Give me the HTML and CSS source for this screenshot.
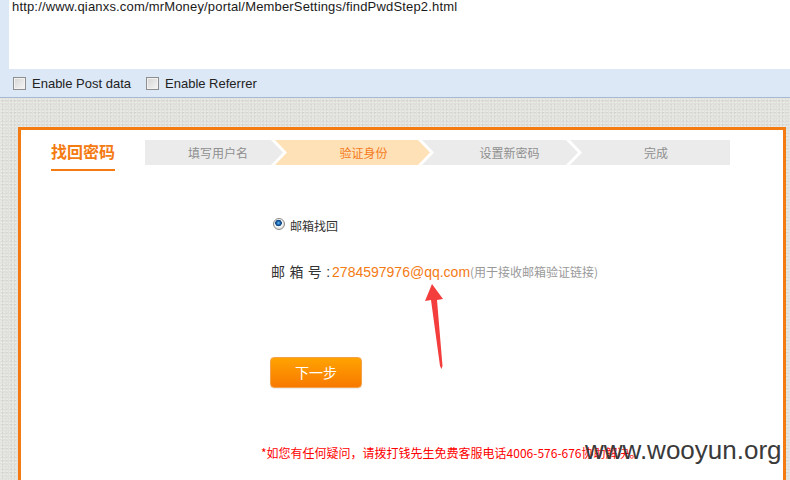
FILE: index.html
```html
<!DOCTYPE html>
<html lang="zh-CN">
<head>
<meta charset="utf-8">
<title>找回密码</title>
<link rel="stylesheet" href="styles.css">
</head>
<body>
<div class="toolbar">
  <div class="urlbox">http://www.qianxs.com/mrMoney/portal/MemberSettings/findPwdStep2.html</div>
  <div class="options">
    <label class="opt"><span class="cb"></span>Enable Post data</label>
    <label class="opt"><span class="cb"></span>Enable Referrer</label>
  </div>
</div>
<div class="page">
  <div class="box">
    <div class="head">
      <h1 class="title">找回密码</h1>
      <div class="steps">
        <div class="step s1">填写用户名</div>
        <div class="step s2 active">验证身份</div>
        <div class="step s3">设置新密码</div>
        <div class="step s4">完成</div>
      </div>
    </div>
    <div class="content">
      <div class="radio-row"><span class="radio"></span>邮箱找回</div>
      <div class="email-row"><span class="lbl">邮 箱 号 :</span><span class="email">2784597976@qq.com</span><span class="hint">(用于接收邮箱验证链接)</span></div>
      <button class="next" type="button">下一步</button>
      <p class="notice">*如您有任何疑问，请拨打钱先生免费客服电话4006-576-676协助解决。</p>
    </div>
  </div>
</div>
<svg class="arrow" width="30" height="92" viewBox="0 0 30 92">
  <polygon points="12,4 23,19 17,20 22.5,86 21.5,89 20,86 11,20 5,21" fill="#f43d3d"/>
</svg>
<div class="watermark">www.wooyun.org</div>
</body>
</html>
```

FILE: styles.css
```css
html, body {
  margin: 0;
  padding: 0;
}
body {
  width: 790px;
  height: 480px;
  overflow: hidden;
  position: relative;
  font-family: "Liberation Sans", "Noto Sans CJK SC", sans-serif;
  background: #dededa;
}
.toolbar {
  background: #dce8f6;
  height: 97px;
  border-bottom: 1px solid #a7b9d0;
  display: flex;
  flex-direction: column;
}
.urlbox {
  margin-left: 9px;
  height: 69px;
  background: #fff;
  padding-left: 3px;
  font-family: "Liberation Sans", sans-serif;
  font-size: 13px;
  letter-spacing: 0.17px;
  line-height: 14px;
  color: #1a1a1a;
  white-space: nowrap;
}
.options {
  height: 28px;
  display: flex;
  align-items: center;
  padding-left: 13px;
  font-size: 13px;
  color: #222;
}
.opt {
  display: flex;
  align-items: center;
  margin-right: 15px;
}
.cb {
  width: 11px;
  height: 11px;
  border: 1px solid #8e8e8e;
  background: linear-gradient(135deg, #d4d4d4, #f6f6f6);
  box-shadow: inset 0 0 0 1px #f2f2f2;
  margin-right: 6px;
}
.page {
  height: 382px;
  box-sizing: border-box;
  padding: 29px 4px 0 18px;
  background-color: #dfdfdb;
  background-image:
    radial-gradient(circle at 30% 40%, rgba(255,255,255,0.35) 0.6px, transparent 1.2px),
    radial-gradient(circle at 70% 70%, rgba(0,0,0,0.06) 0.6px, transparent 1.2px);
  background-size: 3px 3px, 4px 4px;
}
.box {
  height: 100%;
  box-sizing: border-box;
  border: 3px solid #f47a12;
  border-bottom: 0;
  background: #fff;
}
.head {
  display: flex;
  align-items: flex-start;
  padding: 10px 0 0 30px;
}
.title {
  margin: 0;
  width: 64px;
  font-family: "Noto Sans CJK SC", sans-serif;
  font-size: 16px;
  font-weight: bold;
  line-height: 22px;
  color: #f47a12;
  padding-bottom: 7px;
  border-bottom: 2px solid #f47a12;
  white-space: nowrap;
}
.steps {
  display: flex;
  margin-left: 30px;
  height: 25px;
}
.step {
  height: 25px;
  line-height: 25px;
  box-sizing: border-box;
  text-align: center;
  background: #ebebeb;
  color: #8f8f8f;
  font-family: "Noto Sans CJK SC", sans-serif;
  font-size: 12px;
  margin-left: -8px;
  clip-path: polygon(0 0, calc(100% - 12px) 0, 100% 50%, calc(100% - 12px) 100%, 0 100%, 12px 50%);
}
.step.active {
  background: #fee1b6;
  color: #f47a20;
}
.s1 {
  width: 138px;
  margin-left: 0;
  padding-left: 8px;
  clip-path: polygon(0 0, calc(100% - 12px) 0, 100% 50%, calc(100% - 12px) 100%, 0 100%);
}
.s2 { width: 155px; padding-left: 22px; }
.s3 { width: 156px; padding-left: 19px; }
.s4 {
  width: 160px;
  padding-left: 12px;
  clip-path: polygon(0 0, 100% 0, 100% 100%, 0 100%, 12px 50%);
}
.content {
  padding-left: 249px;
  display: flex;
  flex-direction: column;
  align-items: flex-start;
}
.radio-row {
  margin: 48px 0 0 3px;
  height: 14px;
  display: flex;
  align-items: center;
  font-family: "Noto Sans CJK SC", sans-serif;
  font-size: 12px;
  line-height: 14px;
  color: #333;
}
.radio {
  width: 10px;
  height: 10px;
  border: 1px solid #8a8a8a;
  border-radius: 50%;
  background: radial-gradient(circle at 45% 40%, #6fc0ff 0, #1e6cb6 1.6px, #0c3f78 3px, #ffffff 3.6px, #e4e4e4 5px);
  margin-right: 5px;
  margin-bottom: 5px;
}
.email-row {
  margin-top: 29px;
  height: 20px;
  line-height: 20px;
  white-space: nowrap;
  display: flex;
  align-items: baseline;
}
.lbl {
  font-size: 14px;
  color: #333;
  margin-left: 1px;
  margin-right: 2px;
  word-spacing: 0.5px;
}
.email {
  font-size: 14px;
  color: #f47a12;
}
.hint {
  font-family: "Noto Sans CJK SC", sans-serif;
  font-size: 12px;
  color: #999;
}
.next {
  margin-top: 75px;
  width: 92px;
  height: 31px;
  border: 1px solid #f4a24a;
  border-radius: 4px;
  background: linear-gradient(#ffa300, #f87900);
  color: #fff;
  font-family: "Noto Sans CJK SC", sans-serif;
  font-size: 14px;
  line-height: 29px;
  padding: 0;
  box-shadow: 0 1px 1px rgba(0,0,0,0.08);
}
.notice {
  margin: 57px 0 0 -9px;
  font-family: "Noto Sans CJK SC", sans-serif;
  font-size: 12px;
  line-height: 16px;
  color: #ff0000;
  white-space: nowrap;
}
.arrow {
  position: absolute;
  left: 420px;
  top: 280px;
}
.watermark {
  position: absolute;
  left: 585px;
  top: 437px;
  font-family: "Liberation Sans", sans-serif;
  font-size: 26px;
  line-height: 26px;
  color: #3a3a3a;
  white-space: nowrap;
}
```
